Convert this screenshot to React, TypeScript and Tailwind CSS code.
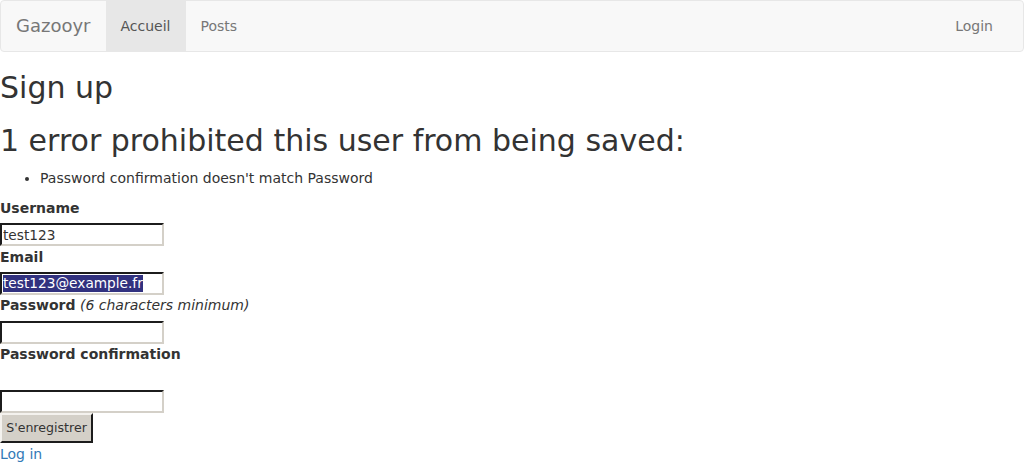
import React from 'react'

const inputCls =
  "block w-[164px] h-[23px] px-[1px] border-2 border-t-[#1c1c1c] border-l-[#1c1c1c] border-b-[#d4d0c8] border-r-[#d4d0c8] bg-white text-[13.7px] leading-[17px] text-[#333] outline-none"

export default function App() {
  return (
    <div className="min-h-[464px] bg-white text-[14px] leading-[20px] text-[#333] font-['DejaVu_Sans',sans-serif]">
      {/* Navbar */}
      <nav className="flex h-[52px] items-stretch justify-between rounded-[4px] border border-[#e7e7e7] bg-[#f8f8f8]">
        <div className="flex items-stretch">
          <a className="px-[15px] py-[15px] text-[18px] leading-[20px] text-[#777]">Gazooyr</a>
          <a className="bg-[#e7e7e7] px-[15px] py-[15px] text-[#555]">Accueil</a>
          <a className="px-[15px] py-[15px] text-[#777]">Posts</a>
        </div>
        <div className="flex items-stretch pr-[15px]">
          <a className="px-[15px] py-[15px] text-[#777]">Login</a>
        </div>
      </nav>

      <h2 className="mt-[19px] text-[30px] leading-[33px] font-normal">Sign up</h2>

      <div>
        <h2 className="mt-[20px] mb-[11px] text-[30px] leading-[33px] font-normal">
          1 error prohibited this user from being saved:
        </h2>
        <ul className="mb-[10px] list-disc pl-[40px]">
          <li>Password confirmation doesn't match Password</li>
        </ul>
      </div>

      <form>
        <div>
          <label className="block mb-[5px] font-bold">Username</label>
          <input className={inputCls} defaultValue="test123" />
        </div>
        <div className="mt-[1px]">
          <label className="block mb-[5px] font-bold">Email</label>
          <div className={inputCls + " flex items-center"}>
            <span className="bg-[#31317f] text-white">test123@example.fr</span>
          </div>
        </div>
        <div>
          <label className="block mb-[6px]">
            <span className="font-bold">Password</span> <em className="italic">(6 characters minimum)</em>
          </label>
          <input className={inputCls} type="password" />
        </div>
        <div>
          <label className="block mb-[26px] font-bold">Password confirmation</label>
          <input className={inputCls} type="password" />
        </div>
        <div>
          <button
            type="button"
            className="h-[30px] w-[93px] border-2 border-t-[#f4f2ee] border-l-[#f4f2ee] border-b-[#1c1c1c] border-r-[#1c1c1c] bg-[#d4d0c8] text-[12.6px] text-[#333]"
          >
            S'enregistrer
          </button>
        </div>
      </form>
      <a className="mt-[1px] block text-[#337ab7]">Log in</a>
    </div>
  )
}
